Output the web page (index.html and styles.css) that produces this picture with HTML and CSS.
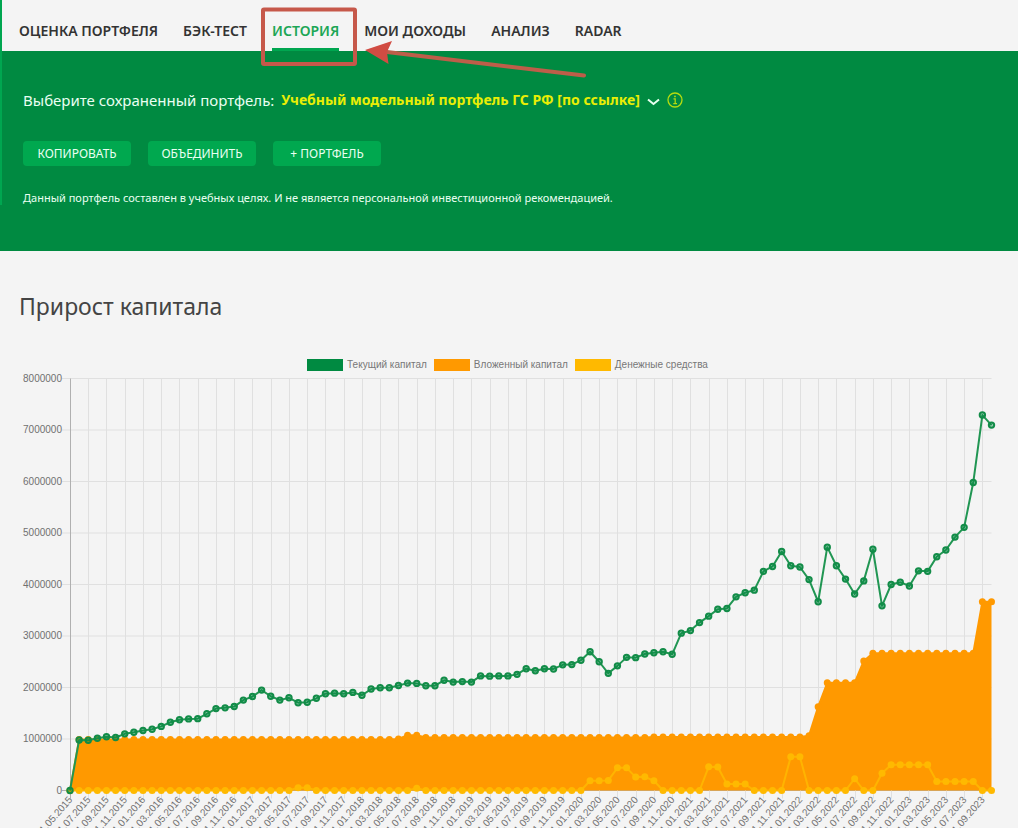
FILE: index.html
```html
<!DOCTYPE html>
<html lang="ru">
<head>
<meta charset="utf-8">
<meta name="viewport" content="width=device-width, initial-scale=1">
<title>История портфеля</title>
<link rel="stylesheet" href="styles.css">
</head>
<body>
<div class="page">
  <header class="top">
    <nav class="tabs" aria-label="Разделы портфеля">
      <a class="tab" href="#estimate">ОЦЕНКА ПОРТФЕЛЯ</a>
      <a class="tab" href="#backtest">БЭК-ТЕСТ</a>
      <a class="tab tab-active" href="#history" aria-current="page">ИСТОРИЯ</a>
      <a class="tab" href="#income">МОИ ДОХОДЫ</a>
      <a class="tab" href="#analysis">АНАЛИЗ</a>
      <a class="tab" href="#radar">RADAR</a>
    </nav>
    <svg class="annotation" width="640" height="90" viewBox="0 0 640 90" aria-hidden="true">
      <rect x="263" y="9.500" width="92" height="54.500" rx="1" fill="none" stroke="#c6584a" stroke-width="4"/>
      <path d="M387 52L584 75.500" stroke="#bd5e49" stroke-width="4" stroke-linecap="round"/>
      <path d="M365 50L392 41L387 52L388.500 64Z" fill="#d14c43"/>
    </svg>
  </header>

  <section class="hero">
    <div class="picker">
      <label for="portfolio">Выберите сохраненный портфель:</label>
      <div class="picker-control">
        <select id="portfolio" class="picker-select">
          <option>Учебный модельный портфель ГС РФ [по ссылке]</option>
        </select>
        <svg class="chevron" width="13" height="8" viewBox="0 0 13 8" aria-hidden="true"><path d="M1 1.500L6.500 6L12 1.500" fill="none" stroke="#e8fff0" stroke-width="2"/></svg>
      </div>
      <button class="info" type="button" aria-label="Информация">
        <svg width="16" height="16" viewBox="0 0 16 16" aria-hidden="true"><circle cx="8" cy="8" r="7" fill="none" stroke="#b5dc10" stroke-width="1.300"/><path d="M6.500 6.800H8.200V11.500M6.300 11.700H10" fill="none" stroke="#b5dc10" stroke-width="1.200"/><circle cx="8" cy="4.400" r=".9" fill="#b5dc10"/></svg>
      </button>
    </div>
    <div class="actions">
      <button class="action" type="button">КОПИРОВАТЬ</button>
      <button class="action" type="button">ОБЪЕДИНИТЬ</button>
      <button class="action" type="button">+ ПОРТФЕЛЬ</button>
    </div>
    <p class="note">Данный портфель составлен в учебных целях. И не является персональной инвестиционной рекомендацией.</p>
  </section>

  <main class="growth">
    <h1 class="title">Прирост капитала</h1>
    <ul class="legend">
      <li class="legend-item"><span class="swatch swatch-current"></span>Текущий капитал</li>
      <li class="legend-item"><span class="swatch swatch-invested"></span>Вложенный капитал</li>
      <li class="legend-item"><span class="swatch swatch-cash"></span>Денежные средства</li>
    </ul>
    <svg id="chart" class="chart" viewBox="0 0 1018 456" role="img" aria-label="Прирост капитала по месяцам"></svg>
  </main>
</div>
<script src="chart.js"></script>
</body>
</html>
```

FILE: styles.css
```css
* { box-sizing: border-box; }

body {
  margin: 0;
  background: #fff;
  font-family: "Noto Sans", "Open Sans", sans-serif;
}

.page {
  position: relative;
  margin-right: 4px;
  background: #f4f4f4;
}

.page::before {
  content: "";
  position: absolute;
  z-index: 1;
  left: 0;
  top: 0;
  width: 2px;
  height: 205px;
  background: #00a650;
}

.top { position: relative; }

.tabs {
  display: flex;
  gap: 25px;
  padding: 16px 19px 0;
}

.tab {
  padding-bottom: 3px;
  border-bottom: 3px solid transparent;
  color: #333;
  font-size: 14px;
  font-weight: 600;
  line-height: 29px;
  white-space: nowrap;
  text-decoration: none;
}

.tab-active {
  border-bottom-color: #00a650;
  color: #1ca656;
}

.annotation {
  position: absolute;
  z-index: 2;
  left: 0;
  top: 0;
  pointer-events: none;
}

.hero {
  padding: 35px 23px 43px;
  background: #008a41;
  color: #eafff2;
}

.picker {
  display: flex;
  align-items: center;
  gap: 7px;
  font-size: 15px;
  line-height: 26px;
}

.picker-control { position: relative; }

.picker-select {
  appearance: none;
  padding: 0 20px 0 0;
  border: 0;
  background: transparent;
  color: #e9ee05;
  font: inherit;
  font-size: 14px;
  font-weight: 700;
}

.chevron {
  position: absolute;
  right: 0;
  top: 12px;
  pointer-events: none;
}

.info {
  display: flex;
  padding: 0;
  border: 0;
  background: transparent;
}

.actions {
  display: flex;
  gap: 17px;
  margin-top: 28px;
}

.action {
  width: 108px;
  height: 25px;
  padding: 0;
  border: 0;
  border-radius: 4px;
  background: #00a84f;
  color: #eafff2;
  font: inherit;
  font-size: 12px;
}

.note {
  margin: 22px 0 0;
  font-size: 11px;
  line-height: 20px;
}

.growth { padding-top: 38px; }

.title {
  margin: 0 19px;
  color: #444;
  font-size: 23px;
  font-weight: 400;
  line-height: 34px;
}

.legend {
  display: flex;
  justify-content: center;
  gap: 7px;
  margin: 35px 0 0;
  padding: 0 3px 0 0;
  color: #777;
  font-family: "Liberation Sans", Arial, sans-serif;
  font-size: 10px;
  line-height: 14px;
  list-style: none;
}

.legend-item {
  display: flex;
  align-items: center;
  gap: 4px;
}

.swatch {
  width: 36px;
  height: 12px;
}

.swatch-current { background: #008a41; }
.swatch-invested { background: #ff9900; }
.swatch-cash { background: #ffb900; }

.chart {
  display: block;
  width: 100%;
  height: auto;
}

.grid { stroke: #e0e0e0; }
.axis { stroke: #b0b0b0; }

.tick {
  fill: #707070;
  font-family: "Liberation Sans", Arial, sans-serif;
  font-size: 10px;
  text-anchor: end;
}

.line {
  fill: none;
  stroke-width: 2;
  stroke-linejoin: round;
}

.line-current { stroke: #219653; }
.line-invested { stroke: #ff9900; }
.line-cash { stroke: #ffb400; }
.area-invested { fill: #ff9900; }

.dot-current { fill: #008a41; fill-opacity: .4; stroke: #128c48; stroke-width: 2; }
.dot-invested { fill: #ff9900; }
.dot-cash { fill: #ffb900; }
```

FILE: chart.js
```js
const SVG = "http://www.w3.org/2000/svg";
const chart = document.getElementById("chart");
const LEFT = 70;
const RIGHT = 991.5;
const TOP = 6.5;
const BOTTOM = 418.5;
const MAX = 8000;

const repeat = (value, count) => Array(count).fill(value);

// Monthly values in thousands, from 05.2015 to 10.2023.
const current = [
  0, 980, 975, 1015, 1045, 1030, 1100, 1130, 1165, 1190, 1245, 1325,
  1375, 1390, 1395, 1490, 1590, 1605, 1630, 1755, 1825, 1950, 1830, 1755,
  1800, 1705, 1715, 1790, 1880, 1890, 1880, 1905, 1850, 1970, 1995, 1995,
  2040, 2085, 2080, 2035, 2035, 2140, 2105, 2115, 2105, 2225, 2220, 2225,
  2225, 2255, 2365, 2325, 2365, 2360, 2440, 2445, 2530, 2695, 2500, 2275,
  2420, 2585, 2580, 2650, 2675, 2695, 2645, 3055, 3105, 3260, 3385, 3520,
  3535, 3760, 3840, 3890, 4255, 4350, 4640, 4365, 4340, 4095, 3665, 4725,
  4365, 4105, 3815, 4070, 4685, 3585, 4000, 4045, 3970, 4265, 4255, 4540,
  4670, 4920, 5110, 5980, 7290, 7095
];
const invested = [
  0, ...repeat(990, 35), 1000, ...repeat(1075, 2), ...repeat(1030, 25),
  ...repeat(1040, 17), 1065, 1625, ...repeat(2090, 4), 2515,
  ...repeat(2665, 12), ...repeat(3665, 2)
];
const cash = [
  ...repeat(0, 25), 55, 55, ...repeat(0, 11), 45, ...repeat(0, 18),
  190, 190, 195, 440, 440, 260, 265, 190, ...repeat(0, 5), 460, 455,
  ...repeat(125, 3), ...repeat(0, 4), 655, 655, ...repeat(0, 5), 230, 0, 0,
  335, ...repeat(500, 5), ...repeat(175, 5), 0, 0
];

const x = (i) => LEFT + (i * (RIGHT - LEFT)) / (current.length - 1);
const y = (v) => BOTTOM - (v * (BOTTOM - TOP)) / MAX;

function add(name, attrs, text) {
  const node = document.createElementNS(SVG, name);
  for (const key in attrs) node.setAttribute(key, attrs[key]);
  if (text) node.textContent = text;
  chart.appendChild(node);
}

const trace = (values) => "M" + values.map((v, i) => `${x(i).toFixed(2)} ${y(v).toFixed(2)}`).join("L");

for (let v = 0; v <= MAX; v += 1000) {
  add("path", { class: v ? "grid" : "axis", d: `M62 ${y(v)}H${RIGHT}` });
  add("text", { class: "tick", x: 62, y: y(v) + 3 }, String(v * 1000 || "0"));
}
for (let i = 0; i < current.length; i += 2) {
  add("path", { class: i ? "grid" : "axis", d: `M${Math.round(x(i)) + 0.5} ${TOP}V${BOTTOM + 8}` });
  const month = ((4 + i) % 12) + 1;
  const year = 2015 + Math.floor((4 + i) / 12);
  const label = `01.${String(month).padStart(2, "0")}.${year}`;
  add("text", { class: "tick", transform: `translate(${x(i) + 3} 428) rotate(-49)` }, label);
}

function drawLine(values, name, radius) {
  add("path", { class: `line line-${name}`, d: trace(values) });
  values.forEach((v, i) => add("circle", { class: `dot-${name}`, cx: x(i), cy: y(v), r: radius }));
}

add("path", { class: "area-invested", d: `${trace(invested)}V${BOTTOM}H${LEFT}Z` });
drawLine(invested, "invested", 3.5);
drawLine(cash, "cash", 3.5);
drawLine(current, "current", 2.7);
```
